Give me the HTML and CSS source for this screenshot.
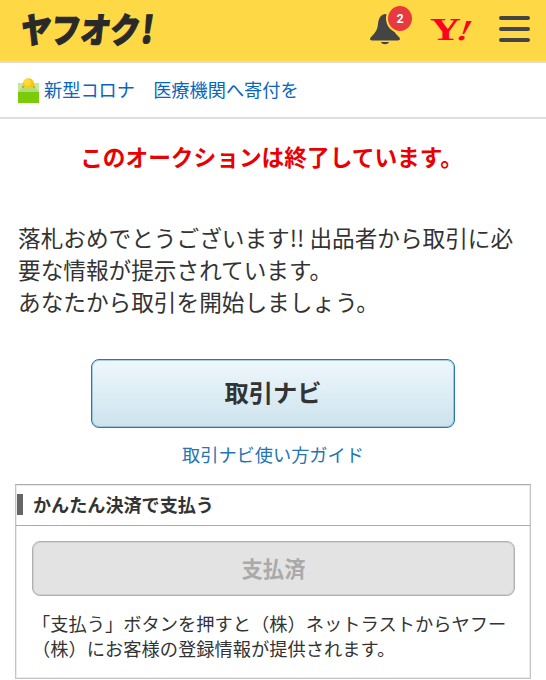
FILE: index.html
```html
<!DOCTYPE html>
<html lang="ja">

<head>
    <meta charset="UTF-8">
    <meta name="viewport" content="width=device-width, initial-scale=1.0">
    <title>ヤフオク!</title>
    <link rel="stylesheet" href="styles.css">
</head>

<body>
    <header class="header">
        <a class="logo"><span class="logo-text">ヤフオク<span class="logo-mark">!</span></span></a>
        <nav class="header-nav">
            <a class="bell">
                <svg width="32" height="32" viewBox="0 0 32 32">
                    <path d="M15 0C10 1 8.500 5 8 10C7.500 16 5 19 1.500 22.500C-1 25 0 26.500 2 26.500H28C30 26.500 31 25 28.500 22.500C25 19 22.500 16 22 10C21.500 5 20 1 15 0Z" fill="#444" />
                    <path d="M11 28H19C18 31 12 31 11 28Z" fill="#444" />
                </svg>
                <span class="badge">2</span>
            </a>
            <a class="yahoo"><span class="yahoo-y">Y</span><span class="yahoo-mark">!</span></a>
            <button class="menu" type="button"><span></span><span></span><span></span></button>
        </nav>
    </header>

    <div class="notice">
        <svg class="notice-icon" width="21" height="25" viewBox="0 0 21 25">
            <rect y="5" width="21" height="20" fill="#c5e995" />
            <path d="M4.500 8C4.500 -2.500 16.500 -2.500 16.500 8L15 9.500H6Z" fill="#fdc50c" />
            <circle cx="9.500" cy="4.500" r="3.500" fill="#ffdb38" />
            <path d="M0 14L4 9.500H17L21 14Z" fill="#b2de78" />
            <rect y="14" width="21" height="11" fill="#7bcb0b" />
            <circle cx="5" cy="9" r=".8" fill="#75852c" />
            <circle cx="16" cy="9" r=".8" fill="#75852c" />
        </svg>
        <a class="notice-link">新型コロナ　医療機関へ寄付を</a>
    </div>

    <main class="main">
        <h1 class="ended">このオークションは終了しています。</h1>
        <p class="message">落札おめでとうございます!! 出品者から取引に必<br>要な情報が提示されています。<br>あなたから取引を開始しましょう。</p>
        <button class="navi-button" type="button">取引ナビ</button>
        <a class="guide-link">取引ナビ使い方ガイド</a>

        <section class="payment">
            <h2 class="payment-title">かんたん決済で支払う</h2>
            <div class="payment-body">
                <button class="paid-button" type="button" disabled>支払済</button>
                <p class="payment-note">「支払う」ボタンを押すと（株）ネットラストからヤフー<br>（株）にお客様の登録情報が提供されます。</p>
            </div>
        </section>
    </main>
</body>

</html>
```
FILE: styles.css
```css
* {
    box-sizing: border-box;
}

body {
    margin: 0;
    background: #fff;
    color: #333;
    font-family: "Noto Sans CJK JP", sans-serif;
    overflow: hidden;
}

h1, h2, p {
    margin: 0;
}

button {
    font-family: inherit;
    padding: 0;
}

.header {
    display: flex;
    justify-content: space-between;
    height: 63px;
    padding: 0 16px 0 21px;
    background: #ffd945;
    border-bottom: 2px solid #dfdcd3;
}

.logo {
    width: 134px;
    height: 54px;
    display: flex;
    align-items: center;
}

.logo-text {
    color: #292929;
    font-size: 35px;
    font-weight: 900;
    line-height: 54px;
    white-space: nowrap;
    -webkit-text-stroke: 1px #292929;
    transform: scaleX(.86) skewX(-8deg);
    transform-origin: left center;
}

.logo-mark {
    font-size: 37px;
    margin-left: 1px;
}

.header-nav {
    display: flex;
    align-items: flex-start;
}

.bell {
    position: relative;
    height: 32px;
    margin: 14px 29px 0 0;
}

.bell svg {
    display: block;
}

.badge {
    position: absolute;
    top: -8px;
    left: 18px;
    width: 24px;
    height: 25px;
    border-radius: 50%;
    background: #e8393e;
    box-shadow: 0 0 0 2px #ffd945;
    color: #fff;
    font: bold 12.5px/25px Roboto, sans-serif;
    text-align: center;
}

.yahoo {
    display: flex;
    width: 40px;
    height: 24px;
    margin: 18px 28px 0 0;
    color: #ff0020;
    font: bold 31px/24px "Liberation Serif", serif;
}

.yahoo-y {
    width: 28px;
    transform: translateX(-1px) scaleX(1.38);
    transform-origin: left center;
}

.yahoo-mark {
    font-style: italic;
    font-size: 29px;
    transform: scaleX(1.25) skewX(-10deg);
}

.menu {
    display: flex;
    flex-direction: column;
    justify-content: space-between;
    width: 31px;
    height: 26px;
    margin-top: 16px;
    border: 0;
    background: none;
}

.menu span {
    width: 31px;
    height: 4px;
    border-radius: 2px;
    background: #444;
}

.notice {
    display: flex;
    align-items: center;
    height: 56px;
    padding: 0 18px;
    border-bottom: 2px solid #dedede;
}

.notice-icon {
    margin-right: 5px;
}

.notice-link {
    margin-top: -2px;
    color: #0766bd;
    font-size: 18.2px;
    line-height: 26px;
}

.main {
    display: flex;
    flex-direction: column;
    align-items: center;
    padding: 22px 15px 0;
}

.ended {
    margin-right: 3px;
    color: #e90000;
    font-size: 22.7px;
    font-weight: 700;
    line-height: 32px;
}

.message {
    width: 100%;
    margin-top: 49px;
    padding-left: 3px;
    font-size: 22.65px;
    line-height: 31.8px;
    white-space: nowrap;
}

.navi-button {
    width: 364px;
    height: 69px;
    margin-top: 42px;
    padding-bottom: 4px;
    border: 1px solid #2979a9;
    border-radius: 8px;
    background: linear-gradient(#eff7fc, #cde3ed);
    box-shadow: inset 0 0 0 1px rgba(55, 129, 173, .35);
    color: #333;
    font-size: 24.3px;
    font-weight: 700;
}

.guide-link {
    margin-top: 13px;
    color: #2475b2;
    font-size: 18.2px;
    line-height: 26px;
}

.payment {
    width: 516px;
    height: 195px;
    margin-top: 17px;
    border: 1px solid #c4c4c4;
    border-top-color: #aaa;
    box-shadow: inset 0 0 0 1px #ebebeb;
}

.payment-title {
    display: flex;
    align-items: center;
    height: 41px;
    padding: 0 0 3px 1px;
    border-bottom: 1px solid #aaa;
    font-size: 18.1px;
    font-weight: 700;
}

.payment-title::before {
    content: '';
    width: 6px;
    height: 21px;
    margin: 2px 10px 0 0;
    background: #666;
}

.payment-body {
    padding: 15px 15px 0 16px;
}

.paid-button {
    display: block;
    width: 483px;
    height: 55px;
    padding-bottom: 3px;
    border: 1px solid #b0b0b0;
    border-radius: 8px;
    background: #e3e3e3;
    box-shadow: inset 0 0 0 1px #d0d0d0;
    color: #aaa;
    font-size: 21.3px;
    font-weight: 700;
}

.payment-note {
    margin-top: 15px;
    font-size: 18.25px;
    line-height: 25px;
    white-space: nowrap;
}
```
